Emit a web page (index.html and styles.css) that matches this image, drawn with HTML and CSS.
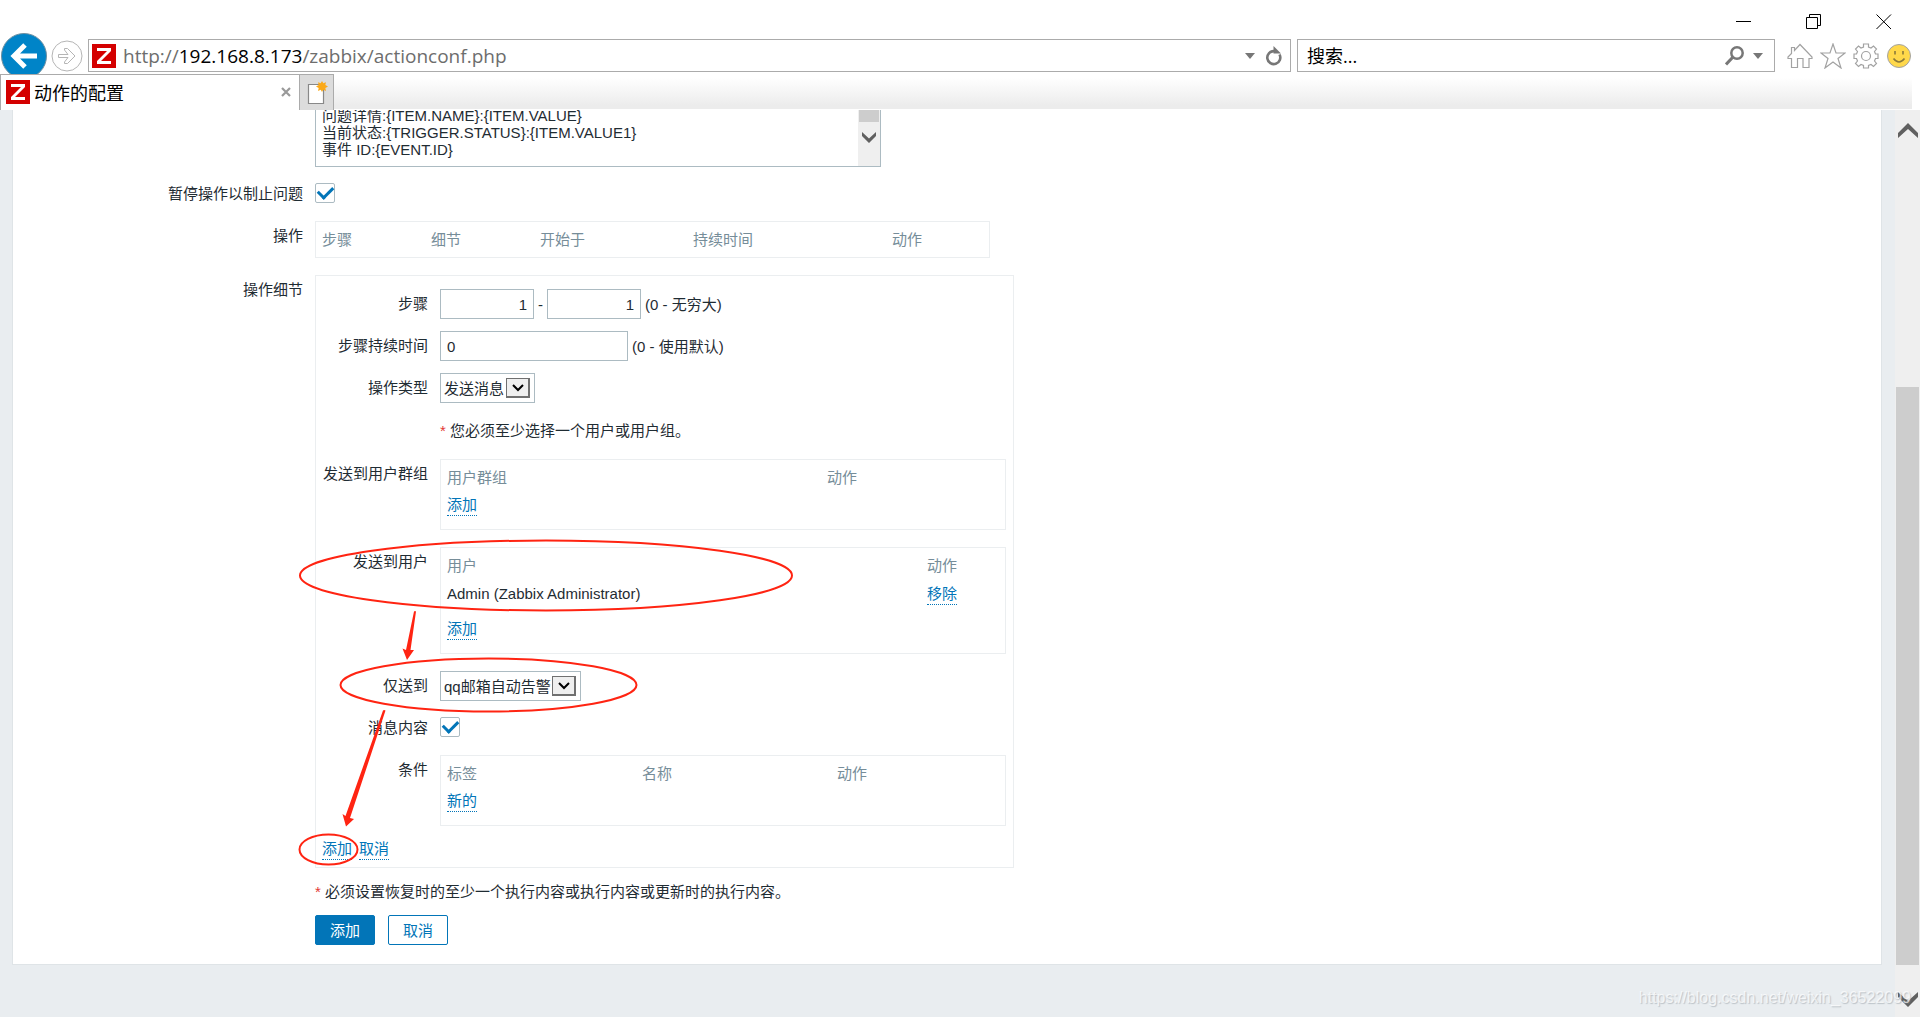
FILE: index.html
```html
<!DOCTYPE html>
<html lang="zh-CN">
<head>
<meta charset="utf-8">
<title>动作的配置</title>
<link rel="stylesheet" href="styles.css">
</head>
<body>
<header class="chrome">
  <div class="window-controls">
    <button class="win-btn" aria-label="最小化"><svg width="16" height="16" viewBox="0 0 16 16"><path d="M0 7.500H15" stroke="#000" fill="none"/></svg></button>
    <button class="win-btn" aria-label="还原"><svg width="16" height="16" viewBox="0 0 16 16"><path d="M.5 3.500H11.500V14.500H.5ZM3.500 3.500V.5H14.500V11.500H11.500" stroke="#000" fill="none"/></svg></button>
    <button class="win-btn" aria-label="关闭"><svg width="16" height="16" viewBox="0 0 16 16"><path d="M.5 .5L15 15M15 .5L.5 15" stroke="#000" fill="none"/></svg></button>
  </div>
  <div class="nav">
    <button class="back" aria-label="后退"><svg width="48" height="48" viewBox="0 0 48 48"><circle cx="24" cy="24" r="22.500" fill="#0084c8" stroke="#6f8fa0"/><path d="M25 13L14 24L25 35M14 24H37" fill="none" stroke="#fff" stroke-width="5"/></svg></button>
    <button class="forward" aria-label="前进"><svg width="32" height="32" viewBox="0 0 32 32"><circle cx="16" cy="16" r="15" fill="#fff" stroke="#b5b5b5"/><path d="M7.500 14.500H17L13.500 10V8.500H16.500L24 16L16.500 23.500H13.500V22L17 17.500H7.500Z" fill="#fff" stroke="#b5b5b5"/></svg></button>
    <div class="box address">
      <span class="favicon"><svg width="24" height="24" viewBox="0 0 24 24"><path d="M5 4H19V7L9 17H19V20H5V17L15 7H5Z" fill="#fff"/></svg></span>
      <div class="url" role="textbox" aria-label="地址">http://<b>192.168.8.173</b>/zabbix/actionconf.php</div>
      <svg width="10" height="6" viewBox="0 0 10 6"><path d="M0 0H10L5 6Z" fill="#777"/></svg>
      <svg class="refresh" width="18" height="20" viewBox="0 0 18 20"><path d="M14.500 8.500A6.500 6.500 0 1 1 9 5.100" fill="none" stroke="#777" stroke-width="2.600"/><path d="M8.500 0L16 7.500H8.500Z" fill="#777"/></svg>
    </div>
    <div class="box search">
      <input class="search-input" type="text" value="搜索..." aria-label="搜索">
      <svg width="20" height="20" viewBox="0 0 20 20"><circle cx="12" cy="7" r="5.700" fill="none" stroke="#777" stroke-width="2.500"/><path d="M8 11L1 18.500" stroke="#777" stroke-width="3"/></svg>
      <svg width="10" height="6" viewBox="0 0 10 6"><path d="M0 0H10L5 6Z" fill="#777"/></svg>
    </div>
    <div class="tools">
      <button aria-label="主页"><svg width="26" height="26" viewBox="0 0 26 26"><path d="M1 14L4.500 10.500V4.500H7.500V7.500L13 1.500L25 14V15.500H22V24.500H16V15.500H10.500V24.500H4.500V15.500H1Z" fill="#fff" stroke="#a2a2a2" stroke-width="1.200"/></svg></button>
      <button aria-label="收藏"><svg width="26" height="26" viewBox="0 0 26 26"><path d="M13 1L16 10H25L18 15.500L21 25L13 19L5 25L8 15.500L1 10H10Z" fill="#fff" stroke="#a2a2a2" stroke-width="1.200"/></svg></button>
      <button aria-label="工具"><svg width="26" height="26" viewBox="0 0 26 26"><path d="M10.500 1H15.500V4L18 5L20.500 3L23.500 6L21.500 8.500L22.500 11H25V15.500H22.500L21.500 18L23.500 20.500L20.500 23.500L18 21.500L15.500 22.500V25H10.500V22.500L8 21.500L5.500 23.500L2.500 20.500L4.500 18L3.500 15.500H1V11H3.500L4.500 8.500L2.500 6L5.500 3L8 5L10.500 4Z" fill="#fff" stroke="#a2a2a2" stroke-width="1.200"/><circle cx="13" cy="13" r="4.500" fill="#fff" stroke="#a2a2a2" stroke-width="1.200"/></svg></button>
      <button aria-label="反馈"><svg width="26" height="26" viewBox="0 0 26 26"><circle cx="13" cy="13" r="11.500" fill="#ffd84a" stroke="#a3a3a3"/><path d="M9 8V11.500M17 8V11.500" stroke="#8c7a3a" stroke-width="1.600"/><path d="M7.500 15.500Q13 22.500 18.500 15.500" fill="none" stroke="#8c7a3a" stroke-width="1.600"/></svg></button>
    </div>
  </div>
  <div class="tabs">
    <div class="tab">
      <span class="favicon"><svg width="24" height="24" viewBox="0 0 24 24"><path d="M5 4H19V7L9 17H19V20H5V17L15 7H5Z" fill="#fff"/></svg></span>
      <span class="tab-title">动作的配置</span>
      <button class="tab-close" aria-label="关闭选项卡"><svg width="10" height="10" viewBox="0 0 10 10"><path d="M1 1L9 9M9 1L1 9" stroke="#999" stroke-width="2.200"/></svg></button>
    </div>
    <button class="new-tab" aria-label="新建选项卡"><svg width="22" height="24" viewBox="0 0 22 24"><path d="M2.500 3.500H17.500V22.500H2.500Z" fill="#fff" stroke="#888" stroke-width="1.200"/><path d="M16 0L17.300 2.300L20 1.300L19.300 4L22 5.500L19.300 7L20 10L17.300 8.800L16 11L14.700 8.800L12 10L12.700 7L10 5.500L12.700 4L12 1.300L14.700 2.300Z" fill="#fba919"/></svg></button>
    <div class="tab-strip"></div>
  </div>
</header>

<div class="viewport">
  <main class="page">
    <form class="panel">
      <div class="form">
        <span></span>
        <div class="message">
          <textarea class="message-text" aria-label="消息内容">问题详情:{ITEM.NAME}:{ITEM.VALUE}
当前状态:{TRIGGER.STATUS}:{ITEM.VALUE1}
事件 ID:{EVENT.ID}</textarea>
          <div class="message-scroll"><div class="message-thumb"></div><svg width="16" height="13" viewBox="0 0 16 13"><path d="M1 1V5L8 12L15 5V1L8 7.500Z" fill="#606060"/></svg></div>
        </div>

        <label class="label" for="pause">暂停操作以制止问题</label>
        <div class="field"><input class="check" type="checkbox" id="pause" checked></div>

        <span class="label">操作</span>
        <div class="table-field">
          <table class="grid operations">
            <colgroup><col class="w109"><col class="w109"><col class="w153"><col class="w199"><col></colgroup>
            <tr><th>步骤</th><th>细节</th><th>开始于</th><th>持续时间</th><th>动作</th></tr>
          </table>
        </div>

        <span class="label">操作细节</span>
        <div class="details">
          <div class="form inner">
            <label class="label" for="from">步骤</label>
            <div class="field line"><input class="text short" id="from" type="text" value="1"><span>-</span><input class="text short" type="text" value="1" aria-label="至"><span>(0 - 无穷大)</span></div>

            <label class="label" for="duration">步骤持续时间</label>
            <div class="field line"><input class="text long" id="duration" type="text" value="0"><span>(0 - 使用默认)</span></div>

            <label class="label" for="type">操作类型</label>
            <div class="field"><span class="select"><select id="type"><option>发送消息</option></select><span class="drop"><svg width="12" height="8" viewBox="0 0 12 8"><path d="M1 1L6 6L11 1" fill="none" stroke="#000" stroke-width="2"/></svg></span></span></div>

            <span></span>
            <p class="note"><span class="star">*</span> 您必须至少选择一个用户或用户组。</p>

            <span class="label">发送到用户群组</span>
            <div class="table-field">
              <table class="grid">
                <colgroup><col class="w380"><col></colgroup>
                <tr><th>用户群组</th><th>动作</th></tr>
                <tr><td><a class="link" href="#">添加</a></td><td></td></tr>
              </table>
            </div>

            <span class="label">发送到用户</span>
            <div class="table-field">
              <table class="grid">
                <colgroup><col class="w480"><col></colgroup>
                <tr><th>用户</th><th>动作</th></tr>
                <tr class="data"><td>Admin (Zabbix Administrator)</td><td><a class="link" href="#">移除</a></td></tr>
                <tr><td><a class="link" href="#">添加</a></td><td></td></tr>
              </table>
            </div>

            <label class="label" for="media">仅送到</label>
            <div class="field"><span class="select"><select id="media"><option>qq邮箱自动告警</option></select><span class="drop"><svg width="12" height="8" viewBox="0 0 12 8"><path d="M1 1L6 6L11 1" fill="none" stroke="#000" stroke-width="2"/></svg></span></span></div>

            <label class="label" for="content">消息内容</label>
            <div class="field"><input class="check" type="checkbox" id="content" checked></div>

            <span class="label">条件</span>
            <div class="table-field">
              <table class="grid">
                <colgroup><col class="w195"><col class="w195"><col></colgroup>
                <tr><th>标签</th><th>名称</th><th>动作</th></tr>
                <tr><td><a class="link" href="#">新的</a></td><td></td><td></td></tr>
              </table>
            </div>
          </div>
          <div class="detail-links"><a class="link" href="#">添加</a><a class="link" href="#">取消</a></div>
        </div>
      </div>
      <div class="footer">
        <p class="note"><span class="star">*</span> 必须设置恢复时的至少一个执行内容或执行内容或更新时的执行内容。</p>
        <div class="actions"><button class="btn primary" type="button">添加</button><button class="btn" type="button">取消</button></div>
      </div>
      <svg class="marks" width="560" height="360" viewBox="290 520 560 360">
        <g fill="none" stroke="#ff2412" stroke-width="2">
          <ellipse cx="546" cy="575.500" rx="246" ry="35"/>
          <ellipse cx="488.500" cy="685" rx="148" ry="26.500"/>
          <ellipse cx="328.500" cy="849.500" rx="29" ry="15"/>
        </g>
        <path d="M414 611.500Q415 610.500 416 611.500L410.500 650L414 650L407 660L402.500 648.500L406 650Z" fill="#ff2412"/>
        <path d="M383 710.500Q384 709.500 385.500 710.500L350 818L354 819L346 826.500L342.500 814L345.500 816Z" fill="#ff2412"/>
      </svg>
    </form>
  </main>
  <div class="scrollbar">
    <svg width="20" height="16" viewBox="0 0 20 16"><path d="M0 15V10L10 0L20 10V15L10 6Z" fill="#606060"/></svg>
    <div class="thumb"></div>
    <svg width="20" height="16" viewBox="0 0 20 16"><path d="M0 1V6L10 16L20 6V1L10 10Z" fill="#606060"/></svg>
  </div>
  <div class="watermark">https://blog.csdn.net/weixin_36522099</div>
</div>
</body>
</html>
```
FILE: styles.css
```css
* { box-sizing: border-box; }

body {
  margin: 0;
  height: 100vh;
  display: flex;
  flex-direction: column;
  overflow: hidden;
  background: #fff;
  color: #1f2c33;
  font: 15px/17px "Liberation Sans", "Noto Sans CJK SC", sans-serif;
}

button { padding: 0; border: 0; background: none; font: inherit; }
svg { display: block; flex: none; }
p { margin: 0; }

/* Browser chrome */
.chrome { flex: none; }
.window-controls {
  height: 32px;
  padding: 14px 28px 0 0;
  display: flex;
  justify-content: flex-end;
  gap: 54px;
}
.win-btn { width: 16px; height: 16px; }
.nav {
  height: 42px;
  display: flex;
  align-items: center;
  padding: 5px 8px 0 0;
  overflow: hidden;
}
.back { align-self: flex-start; height: 38px; margin-top: -5px; }
.forward { margin: 0 5px 0 3px; }
.box {
  height: 33px;
  display: flex;
  align-items: center;
  border: 1px solid #ababab;
  background: #fff;
}
.address { flex: 1; padding: 0 7px 0 3px; margin-right: 6px; }
.refresh { margin-left: 10px; }
.search { width: 478px; padding: 0 11px 0 9px; gap: 8px; }
.search-input {
  flex: 1;
  min-width: 0;
  padding: 0;
  border: 0;
  outline: 0;
  color: #000;
  font: 18px/28px "Open Sans", "Noto Sans CJK SC", sans-serif;
}
.favicon { flex: none; width: 24px; height: 24px; background: #d40000; }
.url {
  flex: 1;
  margin-left: 7px;
  color: #6d6d6d;
  font: 19px/28px "Open Sans", sans-serif;
  white-space: nowrap;
}
.url b { color: #000; font-weight: 400; }
.tools { display: flex; gap: 7px; margin-left: 12px; }

.tabs { display: flex; height: 36px; }
.tab {
  width: 300px;
  display: flex;
  align-items: center;
  padding: 0 8px 2px 5px;
  border: 1px solid #ababab;
  border-bottom: 0;
  background: #fff;
}
.tab-title {
  flex: 1;
  margin-left: 4px;
  color: #000;
  font: 18px/26px "Noto Sans CJK SC", sans-serif;
}
.new-tab {
  width: 34px;
  padding-left: 6px;
  border: 1px solid #ababab;
  border-width: 1px 1px 0 0;
  background: #dcdcdc;
}
.tab-strip {
  flex: 1;
  height: 35px;
  margin-right: 8px;
  background: linear-gradient(#fff 10%, #ececec 90%);
}

/* Page area */
.viewport {
  flex: 1;
  min-height: 0;
  display: flex;
  position: relative;
  overflow: hidden;
  background: #e9edf0;
}
.page { flex: 1; padding: 0 13px 0 12px; }
.panel {
  position: relative;
  padding-bottom: 19px;
  border: 1px solid #dfe4e7;
  border-top: 0;
  background: #fff;
}
.form {
  display: grid;
  grid-template-columns: 290px 1fr;
  gap: 12px;
}
.label { line-height: 30px; text-align: right; white-space: nowrap; }
.field { min-height: 30px; }
.line { display: flex; align-items: center; gap: 4px; white-space: nowrap; }

.message {
  display: flex;
  width: 566px;
  height: 60px;
  margin-top: -3px;
  border: 1px solid #acbbc2;
  border-top: 0;
}
.message-text {
  flex: 1;
  padding: 0 6px;
  border: 0;
  outline: 0;
  resize: none;
  overflow: hidden;
  color: inherit;
  font: inherit;
}
.message-scroll { width: 22px; background: #efefef; }
.message-thumb { height: 15px; margin: 0 1px; background: #cdcdcd; }
.message-scroll svg { margin: 9px 3px; }

.check {
  appearance: none;
  display: grid;
  place-items: center;
  width: 20px;
  height: 20px;
  margin: 4px 0 0;
  border: 1px solid #acbbc2;
  border-radius: 2px;
  background: #fff;
}
.check::after {
  content: "";
  width: 12px;
  height: 7px;
  margin-bottom: 4px;
  border: solid #0275b8;
  border-width: 0 0 3px 3px;
  transform: rotate(-45deg);
}

.table-field { padding-bottom: 5px; }
.grid {
  width: 100%;
  table-layout: fixed;
  border: 1px solid #ebeef0;
  border-spacing: 0;
  padding-bottom: 10px;
}
.grid th, .grid td { padding: 0 6px; text-align: left; font-weight: 400; }
.grid th { height: 35px; color: #768d99; }
.grid td { height: 24px; line-height: 20px; vertical-align: top; }
.grid .data td { height: 36px; line-height: 22px; }
.operations { width: 675px; padding-bottom: 0; }
.w109 { width: 109px; }
.w153 { width: 153px; }
.w195 { width: 195px; }
.w199 { width: 199px; }
.w380 { width: 380px; }
.w480 { width: 480px; }

.details {
  width: 699px;
  padding-top: 13px;
  border: 1px solid #ebeef0;
}
.inner { grid-template-columns: 112px 1fr; padding-right: 7px; }
.text {
  height: 30px;
  padding: 0 6px;
  border: 1px solid #acbbc2;
  outline: 0;
  color: inherit;
  font: inherit;
}
.short { width: 94px; text-align: right; }
.long { width: 188px; }

.select { position: relative; display: inline-block; vertical-align: top; }
.select select {
  appearance: none;
  height: 30px;
  padding: 0 29px 0 3px;
  border: 1px solid #acbbc2;
  border-radius: 0;
  background: #fff;
  color: inherit;
  font: inherit;
}
.drop {
  position: absolute;
  top: 5px;
  right: 5px;
  display: grid;
  place-items: center;
  width: 24px;
  height: 20px;
  border: 1px solid #707070;
  border-width: 1px 2px 2px 1px;
  background: #efefef;
  pointer-events: none;
}
.note { line-height: 32px; white-space: nowrap; }
.star { color: #e33734; }

.link {
  display: inline-block;
  border-bottom: 1px dotted #0275b8;
  color: #0275b8;
  line-height: 20px;
  text-decoration: none;
}
.detail-links { display: flex; gap: 7px; padding: 8px 6px 7px; }

.footer { padding: 8px 0 0 302px; }
.actions { display: flex; gap: 13px; margin-top: 7px; }
.btn {
  width: 60px;
  height: 30px;
  border: 1px solid #0275b8;
  border-radius: 2px;
  background: #fff;
  color: #0275b8;
}
.primary { background: #0275b8; color: #fff; }

/* Hand-drawn annotations laid over the form */
.marks { position: absolute; left: 277px; top: 410px; pointer-events: none; }

.scrollbar {
  width: 25px;
  display: flex;
  flex-direction: column;
  align-items: center;
  padding: 13px 0 10px;
  background: #efefef;
}
.thumb { width: 23px; flex: 577; margin: 248px 0 26px; background: #cdcdcd; }
.watermark {
  position: absolute;
  right: 9px;
  bottom: 9px;
  color: rgba(255, 255, 255, 0.7);
  font-size: 16px;
  line-height: 20px;
  text-shadow: 1px 1px 1px rgba(120, 130, 140, 0.4);
}
```
